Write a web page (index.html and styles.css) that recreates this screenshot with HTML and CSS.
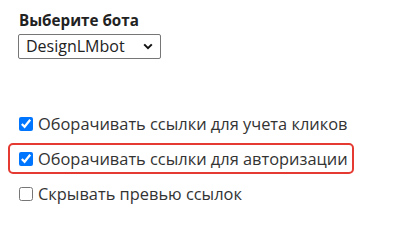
FILE: index.html
```
<!DOCTYPE html>
<html lang="ru">
<head>
<meta charset="utf-8">
<title>Бот</title>
<link rel="stylesheet" href="styles.css">
</head>
<body>
<div class="page">
  <label class="title" for="bot">Выберите бота</label>
  <span class="select-wrap">
    <select id="bot" class="bot-select">
      <option>DesignLMbot</option>
    </select>
    <svg class="chev" width="10" height="7" viewBox="0 0 10 7" aria-hidden="true"><path d="M1.2 1.4 L5 5.2 L8.8 1.4" fill="none" stroke="#111" stroke-width="2"/></svg>
  </span>
  <div class="options">
    <label class="opt"><input type="checkbox" checked><span>Оборачивать ссылки для учета кликов</span></label>
    <label class="opt opt-hl"><input type="checkbox" checked><span>Оборачивать ссылки для авторизации</span></label>
    <label class="opt"><input type="checkbox"><span>Скрывать превью ссылок</span></label>
  </div>
</div>
</body>
</html>
```
FILE: styles.css
```
html, body {
  margin: 0;
  background: #fff;
}
.page {
  padding: 10px 0 0 8px;
  font-family: "Open Sans", "Noto Sans", sans-serif;
  color: #333;
  display: flex;
  flex-direction: column;
  align-items: flex-start;
}
.title {
  display: block;
  margin-left: 11px;
  font-size: 15.2px;
  line-height: 20px;
  font-weight: 700;
  color: #222;
}
.select-wrap {
  position: relative;
  display: block;
  margin: 4px 0 0 10px;
  width: 143px;
  height: 25px;
}
.bot-select {
  -webkit-appearance: none;
  appearance: none;
  box-sizing: border-box;
  display: block;
  width: 143px;
  height: 25px;
  margin: 0;
  padding: 0 0 0 7px;
  border: 1px solid #767676;
  border-radius: 2px;
  background: #fff;
  font-family: "Open Sans", "Noto Sans", sans-serif;
  font-size: 16px;
  line-height: 23px;
  color: #222;
}
.chev {
  position: absolute;
  right: 8px;
  top: 9px;
  pointer-events: none;
}
.options {
  margin-top: 49px;
  display: flex;
  flex-direction: column;
  gap: 4px;
  align-items: flex-start;
}
.opt {
  box-sizing: border-box;
  height: 31px;
  display: flex;
  align-items: center;
  gap: 5px;
  padding: 0 4px 0 9px;
  border: 2px solid transparent;
  border-radius: 5px;
  font-size: 16.4px;
  line-height: 24px;
}
.opt input {
  margin: 0;
  width: 14px;
  height: 14px;
}
.opt-hl {
  border: 2.5px solid #e53a32;
}
```
